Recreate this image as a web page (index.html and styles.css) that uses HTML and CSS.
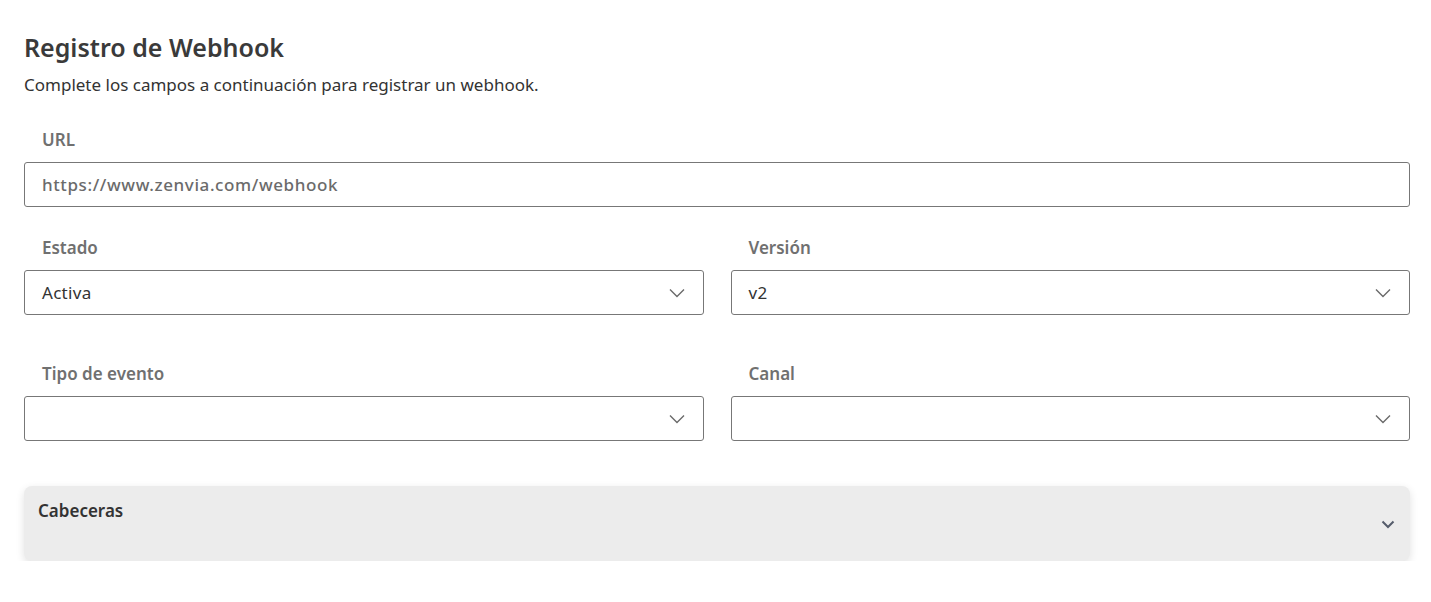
FILE: index.html
```html
<!DOCTYPE html>
<html lang="es">
<head>
<meta charset="utf-8">
<link rel="stylesheet" href="styles.css">
</head>
<body>
<main class="page">
  <h1 class="title">Registro de Webhook</h1>
  <p class="subtitle">Complete los campos a continuación para registrar un webhook.</p>

  <div class="field">
    <label class="label">URL</label>
    <div class="input"><span class="input-text url">https://www.zenvia.com/webhook</span></div>
  </div>

  <div class="row">
    <div class="field">
      <label class="label">Estado</label>
      <div class="input select"><span class="input-text">Activa</span>
        <svg class="chev" viewBox="0 0 16 10" width="16" height="10"><path d="M1 1.5 L8 8.5 L15 1.5" fill="none" stroke="#6a6a6a" stroke-width="1.4"/></svg>
      </div>
    </div>
    <div class="field">
      <label class="label">Versión</label>
      <div class="input select"><span class="input-text">v2</span>
        <svg class="chev" viewBox="0 0 16 10" width="16" height="10"><path d="M1 1.5 L8 8.5 L15 1.5" fill="none" stroke="#6a6a6a" stroke-width="1.4"/></svg>
      </div>
    </div>
  </div>

  <div class="row row-gap">
    <div class="field">
      <label class="label">Tipo de evento</label>
      <div class="input select"><span class="input-text"></span>
        <svg class="chev" viewBox="0 0 16 10" width="16" height="10"><path d="M1 1.5 L8 8.5 L15 1.5" fill="none" stroke="#6a6a6a" stroke-width="1.4"/></svg>
      </div>
    </div>
    <div class="field">
      <label class="label">Canal</label>
      <div class="input select"><span class="input-text"></span>
        <svg class="chev" viewBox="0 0 16 10" width="16" height="10"><path d="M1 1.5 L8 8.5 L15 1.5" fill="none" stroke="#6a6a6a" stroke-width="1.4"/></svg>
      </div>
    </div>
  </div>

  <section class="panel">
    <div class="panel-title">Cabeceras</div>
    <svg class="panel-chev" viewBox="0 0 14 9" width="14" height="9"><path d="M1.5 1.5 L7 7 L12.5 1.5" fill="none" stroke="#555c6b" stroke-width="2"/></svg>
  </section>
</main>
</body>
</html>
```

FILE: styles.css
```css
* { box-sizing: border-box; }
html, body { margin: 0; padding: 0; background: #ffffff; }
body {
  font-family: "Noto Sans", "Open Sans", sans-serif;
  color: #333333;
}
.page {
  padding: 30px 21px 0 24px;
  display: flex;
  flex-direction: column;
}
.title {
  margin: 0;
  font-size: 25px;
  font-weight: 600;
  line-height: 34px;
  color: #3a3a3a;
}
.subtitle {
  margin: 9px 0 0 0;
  font-size: 17px;
  line-height: 24px;
  color: #333333;
}
.field {
  display: flex;
  flex-direction: column;
  flex: 1;
}
.page > .field { margin-top: 32px; }
.label {
  font-size: 17px;
  font-weight: 600;
  color: #707070;
  line-height: 22px;
  padding-left: 18px;
  margin-bottom: 11px;
}
.input {
  height: 45px;
  border: 1px solid #777777;
  border-radius: 3px;
  display: flex;
  align-items: center;
  padding: 0 17px;
}
.input-text {
  font-size: 17px;
  letter-spacing: 0.3px;
  color: #333333;
  flex: 1;
}
.input-text.url { color: #6b6b6b; font-weight: 500; letter-spacing: 0.6px; }
.chev { flex: none; margin-right: 1px; }
.row {
  display: flex;
  gap: 27px;
  margin-top: 30px;
}
.row-gap { margin-top: 48px; }
.panel {
  margin-top: 45px;
  height: 75px;
  background: #ececec;
  border-radius: 8px;
  box-shadow: 0 3px 8px rgba(0,0,0,0.12);
  position: relative;
  padding: 14px 14px;
}
.panel-title {
  font-size: 17px;
  font-weight: 600;
  color: #333333;
  line-height: 22px;
}
.panel-chev {
  position: absolute;
  right: 15px;
  top: 34px;
}
```
